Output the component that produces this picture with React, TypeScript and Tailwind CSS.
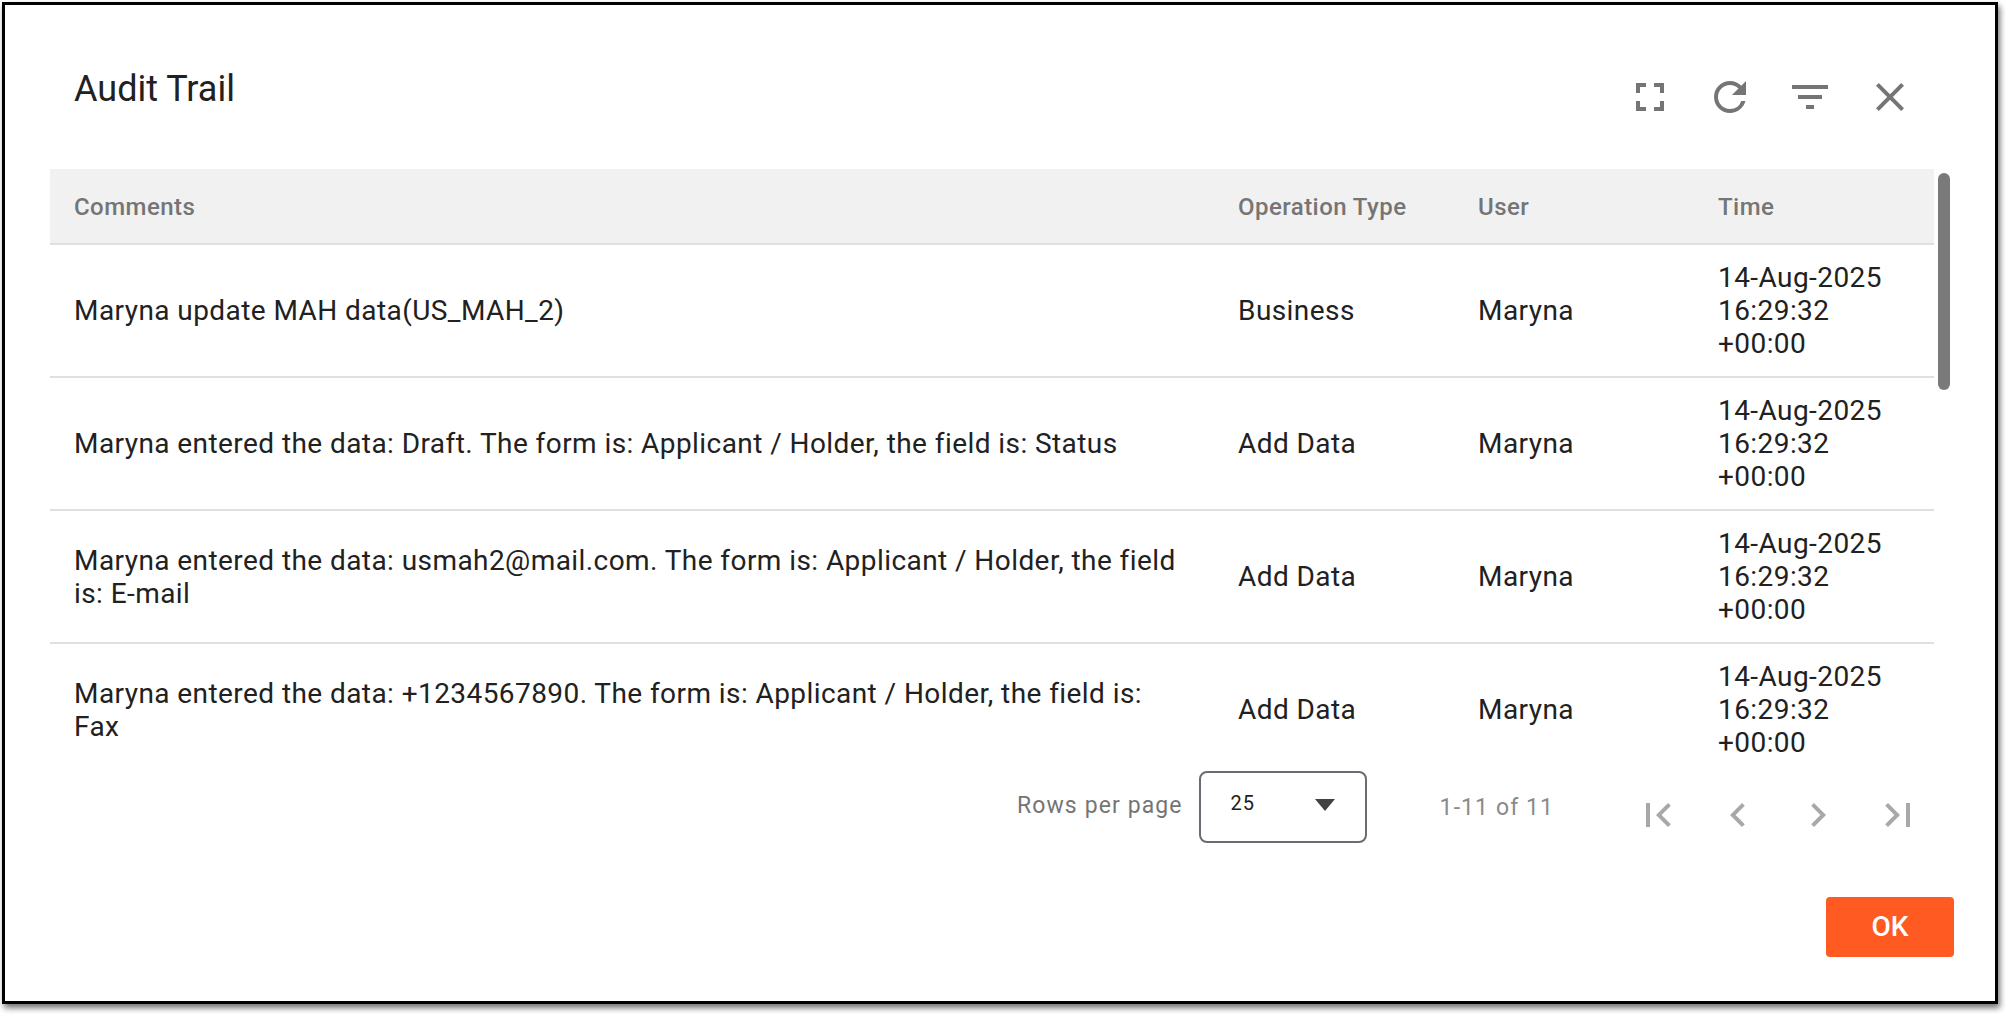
import React from "react";

const rows = [
  { c: "Maryna update MAH data(US_MAH_2)", o: "Business" },
  { c: "Maryna entered the data: Draft. The form is: Applicant / Holder, the field is: Status", o: "Add Data" },
  { c: "Maryna entered the data: usmah2@mail.com. The form is: Applicant / Holder, the field is: E-mail", o: "Add Data" },
  { c: "Maryna entered the data: +1234567890. The form is: Applicant / Holder, the field is: Fax", o: "Add Data" },
];

const cols = "grid grid-cols-[1164px_240px_240px_240px]";

function Icon({ d, fill = "#757575" }: { d: string; fill?: string }) {
  return (
    <svg viewBox="0 0 24 24" width={48} height={48} fill={fill} className="block">
      <path d={d} />
    </svg>
  );
}

export default function App() {
  return (
    <div className="h-[1014px] w-[2006px] overflow-hidden bg-white pl-[2px] pt-[2px] font-['Roboto',sans-serif]">
      <div className="flex h-[1002px] w-[1996px] flex-col border-[3px] border-black bg-white shadow-[2px_4px_6px_rgba(0,0,0,0.55)]">
        <div className="flex h-[164px] shrink-0 items-start justify-between pl-[69px]">
          <h1 className="pt-[60px] text-[36px] leading-[48px] font-normal text-[#212121]">Audit Trail</h1>
          <div className="mr-[81px] mt-[68px] flex gap-[32px]">
            <Icon d="M7 14H5v5h5v-2H7v-3zm-2-4h2V7h3V5H5v5zm12 7h-3v2h5v-5h-2v3zM14 5v2h3v3h2V5h-5z" />
            <Icon d="M17.65 6.35A7.958 7.958 0 0 0 12 4c-4.42 0-7.99 3.58-7.99 8s3.57 8 7.99 8c3.73 0 6.84-2.55 7.73-6h-2.08A5.99 5.99 0 0 1 12 18c-3.31 0-6-2.69-6-6s2.69-6 6-6c1.66 0 3.14.69 4.22 1.78L13 11h7V4l-2.35 2.35z" />
            <Icon d="M10 18h4v-2h-4v2zM3 6v2h18V6H3zm3 7h12v-2H6v2z" />
            <Icon d="M19 6.41 17.59 5 12 10.59 6.41 5 5 6.41 10.59 12 5 17.59 6.41 19 12 13.41 17.59 19 19 17.59 13.41 12z" />
          </div>
        </div>

        <div className="flex h-[596px] shrink-0 pl-[45px]">
          <div className="h-full w-[1884px] overflow-hidden">
            <div className={`${cols} h-[76px] items-center border-b-2 border-[#e0e0e0] bg-[#f1f1f1] pt-[2px] text-[24px] font-medium tracking-[0.45px] text-[#757575]`}>
              <div className="pl-[24px]">Comments</div>
              <div className="pl-[24px]">Operation Type</div>
              <div className="pl-[24px]">User</div>
              <div className="pl-[24px]">Time</div>
            </div>
            {rows.map((r) => (
              <div key={r.c} className={`${cols} h-[133px] items-center border-b-2 border-[#e0e0e0] text-[28px] leading-[33px] tracking-[0.43px] text-[#212121]`}>
                <div className="pl-[24px] pr-[24px]">{r.c}</div>
                <div className="pl-[24px]">{r.o}</div>
                <div className="pl-[24px]">Maryna</div>
                <div className="pl-[24px]">
                  14-Aug-2025
                  <br />
                  16:29:32
                  <br />
                  +00:00
                </div>
              </div>
            ))}
          </div>
          <div className="ml-[4px] mt-[4px] h-[217px] w-[12px] rounded-full bg-[#7a7a7a]" />
        </div>

        <div className="flex h-[80px] shrink-0 items-start pl-[1012px] text-[23px] tracking-[1.1px] text-[#757575]">
          <span className="mt-[25px] leading-[32px]">Rows per page</span>
          <div className="ml-[16px] mt-[6px] flex h-[72px] w-[168px] items-start justify-between rounded-[8px] border-2 border-[#6b6b73] pl-[30px] pr-[30px] pt-[16px]">
            <span className="text-[20px] leading-[28px] tracking-[1px] text-[#212121]">25</span>
            <svg width="20" height="12" viewBox="0 0 20 12" className="mt-[10px]"><path d="M0 0h20L10 12z" fill="#424242" /></svg>
          </div>
          <span className="ml-[73px] mt-[27px] leading-[32px] text-[#8a8a8a]">1-11 of 11</span>
          <div className="ml-[80px] mt-[26px] flex gap-[32px]">
            <Icon fill="#a8a8a8" d="M6 6h2v12H6zM18.4 7.4 17 6l-6 6 6 6 1.4-1.4-4.6-4.6z" />
            <Icon fill="#a8a8a8" d="M15.4 7.4 14 6l-6 6 6 6 1.4-1.4-4.6-4.6z" />
            <Icon fill="#a8a8a8" d="M8.6 7.4 10 6l6 6-6 6-1.4-1.4 4.6-4.6z" />
            <Icon fill="#a8a8a8" d="M16 6h2v12h-2zM5.6 7.4 7 6l6 6-6 6-1.4-1.4 4.6-4.6z" />
          </div>
        </div>

        <div className="flex flex-1 justify-end pr-[41px] pt-[52px]">
          <button className="flex h-[60px] w-[128px] items-center justify-center rounded-[4px] bg-[#ff5a22] text-[28px] font-medium text-white">OK</button>
        </div>
      </div>
    </div>
  );
}
